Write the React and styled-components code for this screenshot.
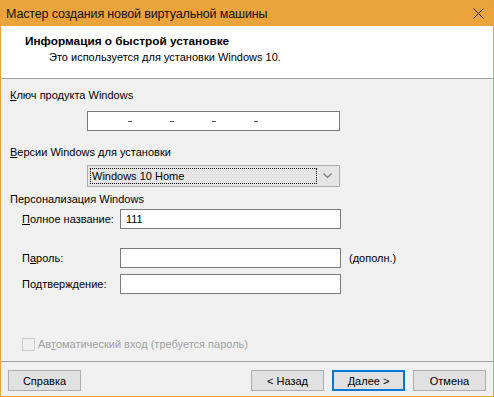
import React from "react";
import styled, { createGlobalStyle } from "styled-components";

const GlobalStyle = createGlobalStyle`
  body {
    margin: 0;
    font-family: "Liberation Sans", Arial, sans-serif;
    font-size: 11px;
    color: #000;
  }
`;

const Window = styled.div`
  width: 494px;
  height: 397px;
  box-sizing: border-box;
  border: 1px solid #e9a23b;
  background: #f0f0f0;
  display: flex;
  flex-direction: column;
`;

const TitleBar = styled.div`
  height: 25px;
  flex: none;
  background: #eba33c;
  display: flex;
  align-items: center;
  justify-content: space-between;
  padding: 0 9px 0 5px;
  font-family: "Liberation Sans", sans-serif;
  font-size: 12.5px;
  letter-spacing: -0.15px;
  color: #111;
`;

const Header = styled.div`
  height: 53px;
  flex: none;
  box-sizing: border-box;
  background: #fff;
  border-bottom: 1px solid #a0a0a0;
  padding: 9px 0 0 24px;
  line-height: 13px;
`;

const HeaderTitle = styled.div`
  font-weight: bold;
  font-size: 11.8px;
`;

const HeaderSub = styled.div`
  margin: 3px 0 0 24px;
`;

const Body = styled.div`
  flex: 1;
  padding-left: 9px;
  line-height: 13px;
`;

const Label = styled.div`
  margin-top: ${(p) => p.$top}px;
`;

const TextBox = styled.div`
  box-sizing: border-box;
  width: ${(p) => p.$width}px;
  height: 20px;
  background: #fff;
  border: 1px solid #7a7a7a;
  display: flex;
  align-items: center;
  padding-left: 5px;
`;

const KeyBox = styled(TextBox)`
  margin: 9px 0 0 77px;
  padding-left: 40px;
  gap: 38px;
`;

const Dash = styled.span`
  width: 4px;
  height: 1px;
  background: #555;
`;

const Combo = styled.div`
  box-sizing: border-box;
  margin: 6px 0 0 77px;
  width: 253px;
  height: 22px;
  background: #e5e5e5;
  border: 1px solid #acacac;
  display: flex;
  align-items: center;
  padding: 0 2px;
`;

const ComboText = styled.div`
  flex: 1;
  height: 16px;
  box-sizing: border-box;
  border: 1px dotted #000;
  padding-left: 1px;
  line-height: 14px;
`;

const ComboArrow = styled.div`
  width: 20px;
  display: flex;
  justify-content: center;
`;

const Fields = styled.div`
  margin-left: 12px;
  display: flex;
  flex-direction: column;
`;

const FieldRow = styled.div`
  display: flex;
  align-items: center;
  margin-top: ${(p) => p.$top}px;
`;

const FieldLabel = styled.div`
  width: 98px;
`;

const Note = styled.div`
  margin-left: 8px;
`;

const CheckRow = styled.label`
  display: flex;
  align-items: center;
  gap: 3px;
  margin-top: 44px;
  color: #a0a0a0;
`;

const CheckBox = styled.span`
  width: 13px;
  height: 13px;
  box-sizing: border-box;
  border: 1px solid #cccccc;
  background: #f0f0f0;
`;

const Footer = styled.div`
  height: 35px;
  flex: none;
  box-sizing: border-box;
  border-top: 1px solid #a0a0a0;
  padding: 8px 7px 0 7px;
  display: flex;
  gap: 8px;
`;

const Spacer = styled.div`
  flex: 1;
`;

const Button = styled.button`
  width: 73px;
  height: 21px;
  box-sizing: border-box;
  background: #e1e1e1;
  border: 1px solid ${(p) => (p.$default ? "#0078d7" : "#adadad")};
  box-shadow: ${(p) => (p.$default ? "inset 0 0 0 1px #0078d7" : "none")};
  font-family: inherit;
  font-size: 11px;
  color: #000;
  padding: 0;
`;

const U = styled.span`
  text-decoration: underline;
`;

export default function App() {
  return (
    <>
      <GlobalStyle />
      <Window>
        <TitleBar>
          <span>Мастер создания новой виртуальной машины</span>
          <svg width="11" height="11" viewBox="0 0 11 11">
            <path d="M0.5 0.5 L10.5 10.5 M10.5 0.5 L0.5 10.5" stroke="#222" strokeWidth="1" />
          </svg>
        </TitleBar>
        <Header>
          <HeaderTitle>Информация о быстрой установке</HeaderTitle>
          <HeaderSub>Это используется для установки Windows 10.</HeaderSub>
        </Header>
        <Body>
          <Label $top={10}>
            <U>К</U>люч продукта Windows
          </Label>
          <KeyBox $width={253}>
            <Dash />
            <Dash />
            <Dash />
            <Dash />
          </KeyBox>
          <Label $top={15}>
            <U>В</U>ерсии Windows для установки
          </Label>
          <Combo>
            <ComboText>Windows 10 Home</ComboText>
            <ComboArrow>
              <svg width="9" height="6" viewBox="0 0 9 6">
                <path d="M0.5 0.5 L4.5 4.5 L8.5 0.5" fill="none" stroke="#777" strokeWidth="1.2" />
              </svg>
            </ComboArrow>
          </Combo>
          <Label $top={6}>Персонализация Windows</Label>
          <Fields>
            <FieldRow $top={3}>
              <FieldLabel>
                <U>П</U>олное название:
              </FieldLabel>
              <TextBox $width={221}>111</TextBox>
            </FieldRow>
            <FieldRow $top={19}>
              <FieldLabel>
                П<U>а</U>роль:
              </FieldLabel>
              <TextBox $width={221} />
              <Note>(дополн.)</Note>
            </FieldRow>
            <FieldRow $top={6}>
              <FieldLabel>
                По<U>д</U>тверждение:
              </FieldLabel>
              <TextBox $width={221} />
            </FieldRow>
            <CheckRow>
              <CheckBox />
              <span>
                Ав<U>т</U>оматический вход (требуется пароль)
              </span>
            </CheckRow>
          </Fields>
        </Body>
        <Footer>
          <Button>Справка</Button>
          <Spacer />
          <Button>&lt; Назад</Button>
          <Button $default>Далее &gt;</Button>
          <Button>Отмена</Button>
        </Footer>
      </Window>
    </>
  );
}
